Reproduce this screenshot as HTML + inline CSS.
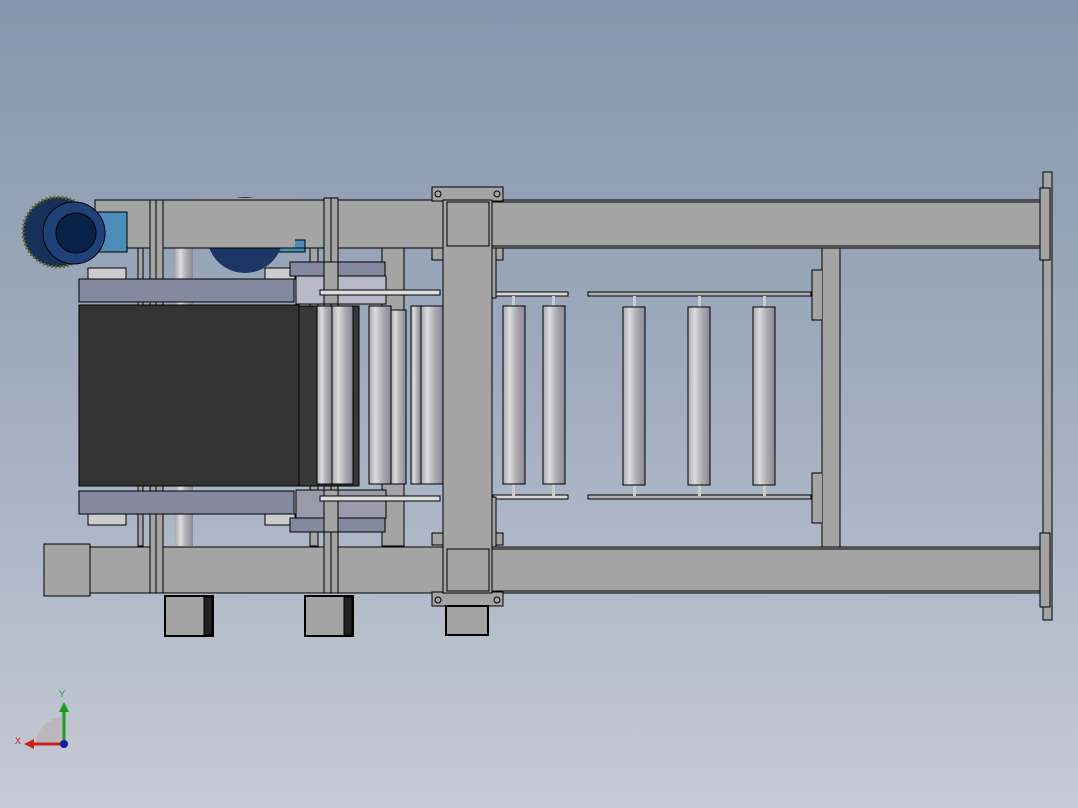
<!DOCTYPE html>
<html><head><style>
html,body{margin:0;padding:0;width:1078px;height:808px;overflow:hidden}
body{background:linear-gradient(#8696ac 0%,#9eabbe 45%,#c6cad4 100%)}
svg{position:absolute;left:0;top:0}
</style></head><body>
<svg width="1078" height="808" viewBox="0 0 1078 808" xmlns="http://www.w3.org/2000/svg" font-family="Liberation Sans, sans-serif">
<defs>
<linearGradient id="rl" x1="0" x2="1" y1="0" y2="0">
<stop offset="0" stop-color="#a8a8ae"/><stop offset="0.3" stop-color="#dcdcde"/><stop offset="0.6" stop-color="#b0b0b4"/><stop offset="1" stop-color="#8c8694"/>
</linearGradient>
</defs>
<g stroke="#000" stroke-width="1">
<rect x="175" y="248" width="18" height="298" fill="url(#rl)" stroke="none"/>
<rect x="138" y="248" width="5" height="298" fill="#a4a4a4"/>
<rect x="310" y="248" width="8" height="298" fill="#a4a4a4"/>
<rect x="382" y="248" width="22" height="298" fill="#a4a4a4"/>
<!-- top beam -->
<rect x="95" y="200" width="948" height="48" fill="#a4a4a4"/>
<line x1="490" y1="202" x2="1043" y2="202"/><line x1="490" y1="246" x2="1043" y2="246"/>
<!-- bottom beam -->
<rect x="44" y="544" width="46" height="52" fill="#a4a4a4"/>
<rect x="90" y="547" width="953" height="46" fill="#a4a4a4"/>
<line x1="490" y1="549" x2="1043" y2="549"/><line x1="490" y1="591" x2="1043" y2="591"/>
<!-- vertical posts (behind belt) -->
<rect x="150" y="200" width="13" height="393" fill="#a4a4a4"/>
<line x1="156" y1="200" x2="156" y2="593"/>
<rect x="324" y="198" width="14" height="395" fill="#a4a4a4"/>
<line x1="331" y1="198" x2="331" y2="593"/>
<!-- right crossbar -->
<rect x="822" y="248" width="18" height="299" fill="#a4a4a4"/>
<path d="M822 270 h-10 v50 h10 M822 473 h-10 v50 h10" fill="#a4a4a4"/>
<!-- right end plate -->
<rect x="1043" y="172" width="9" height="448" fill="#a4a4a4"/>
<rect x="1040" y="188" width="10" height="72" fill="#a4a4a4"/>
<rect x="1040" y="533" width="10" height="74" fill="#a4a4a4"/>
<!-- rails right -->
<rect x="588" y="292" width="223" height="4" fill="#b0b0b0"/>
<rect x="588" y="495" width="223" height="4" fill="#b0b0b0"/>
<rect x="493" y="292" width="75" height="4" fill="#d8d8d8"/>
<rect x="493" y="495" width="75" height="4" fill="#d8d8d8"/>
<!-- right rollers -->
<g>
<rect x="512" y="296" width="3" height="200" fill="#ccc" stroke="none"/>
<rect x="552" y="296" width="3" height="200" fill="#ccc" stroke="none"/>
<rect x="633" y="296" width="3" height="200" fill="#ccc" stroke="none"/>
<rect x="698" y="296" width="3" height="200" fill="#ccc" stroke="none"/>
<rect x="763" y="296" width="3" height="200" fill="#ccc" stroke="none"/>
<rect x="503" y="306" width="22" height="178" fill="url(#rl)"/>
<rect x="543" y="306" width="22" height="178" fill="url(#rl)"/>
<rect x="623" y="307" width="22" height="178" fill="url(#rl)"/>
<rect x="688" y="307" width="22" height="178" fill="url(#rl)"/>
<rect x="753" y="307" width="22" height="178" fill="url(#rl)"/>
</g>
<!-- left gray plates -->
<rect x="79" y="279" width="215" height="23" fill="#8589a0"/>
<rect x="79" y="491" width="215" height="23" fill="#8589a0"/>
<rect x="88" y="268" width="38" height="11" fill="#ccc"/>
<rect x="88" y="514" width="38" height="11" fill="#ccc"/>
<rect x="265" y="268" width="30" height="11" fill="#ccc"/>
<rect x="265" y="514" width="30" height="11" fill="#ccc"/>
<!-- tension blocks -->
<rect x="290" y="262" width="95" height="14" fill="#8589a0"/>
<rect x="290" y="518" width="95" height="14" fill="#8589a0"/>
<rect x="296" y="276" width="90" height="28" fill="#b8b8c8"/>
<rect x="296" y="490" width="90" height="28" fill="#9a9aaa"/>
<rect x="324" y="262" width="14" height="42" fill="#a4a4a4"/>
<rect x="324" y="490" width="14" height="42" fill="#a4a4a4"/>
<rect x="320" y="290" width="120" height="5" fill="#ddd"/>
<rect x="320" y="496" width="120" height="5" fill="#ddd"/>
<!-- black belt -->
<rect x="79" y="305" width="220" height="181" fill="#333"/>
<rect x="299" y="306" width="60" height="180" fill="#383838"/>
<!-- left rollers -->
<rect x="317" y="306" width="15" height="178" fill="url(#rl)"/>
<rect x="332" y="306" width="21" height="178" fill="url(#rl)"/>
<rect x="369" y="306" width="22" height="178" fill="url(#rl)"/>
<rect x="391" y="310" width="15" height="174" fill="url(#rl)"/>
<rect x="411" y="306" width="10" height="178" fill="url(#rl)"/>
<rect x="421" y="306" width="22" height="178" fill="url(#rl)"/>
<!-- center column -->
<rect x="432" y="187" width="71" height="14" fill="#a4a4a4"/>
<rect x="432" y="592" width="71" height="14" fill="#a4a4a4"/>
<circle cx="438" cy="194" r="3" fill="none"/><circle cx="497" cy="194" r="3" fill="none"/>
<circle cx="438" cy="600" r="3" fill="none"/><circle cx="497" cy="600" r="3" fill="none"/>
<rect x="432" y="248" width="11" height="12" fill="#a4a4a4"/><rect x="492" y="248" width="11" height="12" fill="#a4a4a4"/>
<rect x="432" y="533" width="11" height="12" fill="#a4a4a4"/><rect x="492" y="533" width="11" height="12" fill="#a4a4a4"/>
<rect x="443" y="200" width="49" height="393" fill="#a4a4a4"/>
<rect x="447" y="202" width="42" height="44" fill="#a4a4a4"/>
<rect x="447" y="549" width="42" height="42" fill="#a4a4a4"/>
<rect x="492" y="248" width="4" height="50" fill="#a4a4a4"/>
<rect x="492" y="497" width="4" height="50" fill="#a4a4a4"/>
<!-- steppers -->
<rect x="165" y="596" width="48" height="40" fill="#a4a4a4" stroke-width="2"/>
<rect x="305" y="596" width="48" height="40" fill="#a4a4a4" stroke-width="2"/>
<rect x="446" y="606" width="42" height="29" fill="#a4a4a4" stroke-width="2"/>
<rect x="204" y="597" width="8" height="38" fill="#222"/>
<rect x="344" y="597" width="8" height="38" fill="#222"/>
<!-- motors -->
<rect x="95" y="212" width="32" height="40" fill="#4a8db8"/>
<rect x="265" y="240" width="40" height="12" fill="#4a8db8"/>
<circle cx="245" cy="235" r="38" fill="#1c3766" stroke="none"/>
<rect x="200" y="198" width="95" height="50" fill="#a4a4a4" stroke="none"/>
<line x1="163" y1="200" x2="324" y2="200"/><line x1="163" y1="248" x2="324" y2="248"/>
<circle cx="58" cy="232" r="35" fill="#17305a" stroke="#6a6a20" stroke-width="3" stroke-dasharray="2 2"/>
<circle cx="74" cy="233" r="31" fill="#1e4178"/>
<circle cx="76" cy="233" r="20" fill="#0a2248"/>
</g>
<!-- axes -->
<path d="M36 745 A28 28 0 0 1 64 717 L64 745 Z" fill="#b8b8be"/>
<line x1="64" y1="745" x2="64" y2="711" stroke="#1aa01a" stroke-width="3"/>
<path d="M59 712 L64 702 L69 712 Z" fill="#1aa01a"/>
<line x1="64" y1="744" x2="32" y2="744" stroke="#cc2020" stroke-width="3"/>
<path d="M34 739 L24 744 L34 749 Z" fill="#cc2020"/>
<circle cx="64" cy="744" r="4" fill="#1a1aa0"/>
<text x="59" y="697" font-size="9" fill="#1aa01a">Y</text>
<text x="15" y="744" font-size="9" fill="#cc2020">X</text>
</svg>
</body></html>
